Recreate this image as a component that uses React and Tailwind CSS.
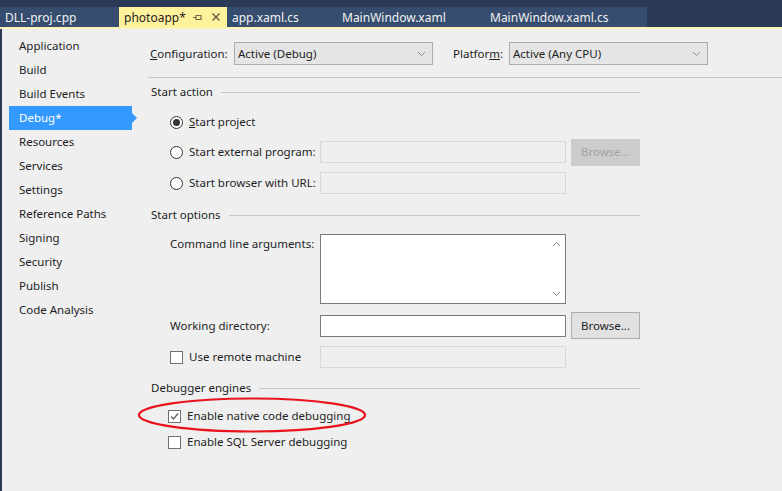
import { useState } from 'react';

const sidebarItems = [
  'Application',
  'Build',
  'Build Events',
  'Debug*',
  'Resources',
  'Services',
  'Settings',
  'Reference Paths',
  'Signing',
  'Security',
  'Publish',
  'Code Analysis',
];

const tabs = [
  { name: 'DLL-proj.cpp', w: 'w-[119px]' },
  { name: 'photoapp*', w: 'w-[108px]', active: true },
  { name: 'app.xaml.cs', w: 'w-[110px]' },
  { name: 'MainWindow.xaml', w: 'w-[148px]' },
  { name: 'MainWindow.xaml.cs', w: 'w-[162px]' },
];

function Chevron({ up }) {
  return (
    <svg width="9" height="6" viewBox="0 0 9 6" className="shrink-0">
      <path d={up ? 'M1 5 L4.5 1.5 L8 5' : 'M1 1 L4.5 4.5 L8 1'} fill="none" stroke="#8a8a8a" strokeWidth="1" />
    </svg>
  );
}

function Dropdown({ value }) {
  return (
    <div className="w-[199px] h-[23px] bg-[#e5e5e5] border border-[#acacac] flex items-center justify-between pl-[3px] pr-[6px]">
      <span>{value}</span>
      <Chevron />
    </div>
  );
}

function SectionHeader({ title, className }) {
  return (
    <div className={`flex items-center h-[16px] w-[492px] pl-[3px] ${className}`}>
      <span>{title}</span>
      <div className="flex-1 h-px bg-[#c6c6c6] ml-[8px]" />
    </div>
  );
}

function Radio({ checked }) {
  return (
    <div className="w-[13px] h-[13px] rounded-full border border-[#333333] bg-white flex items-center justify-center shrink-0">
      {checked && <div className="w-[7px] h-[7px] rounded-full bg-[#333333]" />}
    </div>
  );
}

function Checkbox({ checked }) {
  return (
    <div className="w-[13px] h-[13px] border border-[#707070] bg-white flex items-center justify-center shrink-0">
      {checked && (
        <svg width="11" height="11" viewBox="0 0 11 11">
          <path d="M2 5.5 L4.5 8 L9 2.5" fill="none" stroke="#5a5a5a" strokeWidth="1.2" />
        </svg>
      )}
    </div>
  );
}

function TextBox({ disabled, className = '' }) {
  return (
    <div
      className={`w-[246px] h-[22px] shrink-0 border ${
        disabled ? 'bg-[#efefef] border-[#d9d9d9]' : 'bg-white border-[#7a7a7a]'
      } ${className}`}
    />
  );
}

function BrowseButton({ disabled }) {
  return (
    <div
      className={`w-[69px] h-[27px] ml-[5px] flex items-center justify-center border ${
        disabled ? 'bg-[#cccccc] border-[#cccccc] text-[#a2a2a2]' : 'bg-[#e1e1e1] border-[#adadad] text-[#1e1e1e]'
      }`}
    >
      Browse...
    </div>
  );
}

export default function App() {
  const [startAction, setStartAction] = useState('project');

  return (
    <div className="relative w-[782px] h-[491px] overflow-hidden bg-[#efefef] text-[11.5px] text-[#1e1e1e] [font-family:'Noto_Sans',sans-serif] leading-none whitespace-nowrap">
      {/* document tabs */}
      <div className="h-[29px] bg-[#2a3a57] flex flex-col">
        <div className="h-[7px]" />
        <div className="flex h-[20px]">
          {tabs.map((t) =>
            t.active ? (
              <div key={t.name} className={`${t.w} bg-[#fff29d] flex items-center pl-[5px] pr-[6px] text-[#1e1e1e]`}>
                <span className="text-[12px] pt-px">{t.name}</span>
                <svg width="11" height="9" viewBox="0 0 11 9" className="ml-auto">
                  <path d="M1 4.5 H4 M4 2 V7 M4 2.5 H9 V6.5 H4" fill="none" stroke="#6e6a4a" strokeWidth="1.2" />
                </svg>
                <svg width="10" height="10" viewBox="0 0 10 10" className="ml-[8px]">
                  <path d="M1.5 1.5 L8.5 8.5 M8.5 1.5 L1.5 8.5" stroke="#5a5640" strokeWidth="1.3" />
                </svg>
              </div>
            ) : (
              <div key={t.name} className={`${t.w} bg-[#364d6f] flex items-center pl-[5px] pt-px text-[12px] text-[#f1f1f1]`}>
                {t.name}
              </div>
            )
          )}
        </div>
        <div className="h-[2px] bg-[#fdf3b5]" />
      </div>

      <div className="flex h-[462px]">
        <div className="w-[2px] bg-[#2a3a57]" />

        {/* sidebar */}
        <div className="w-[146px] pt-[5px] flex flex-col">
          {sidebarItems.map((item) =>
            item === 'Debug*' ? (
              <div key={item} className="relative ml-[7px] w-[123px] h-[24px] bg-[#3399ff] text-white flex items-center pl-[10px]">
                {item}
                <div className="absolute right-[-5px] top-[7px] w-0 h-0 border-y-[5px] border-y-transparent border-l-[5px] border-l-[#3399ff]" />
              </div>
            ) : (
              <div key={item} className="h-[24px] flex items-center pl-[17px]">
                {item}
              </div>
            )
          )}
        </div>

        {/* main */}
        <div className="flex-1 flex flex-col">
          <div className="mt-[13px] h-[23px] flex items-center pl-[2px]">
            <span className="w-[84px]">
              <span className="underline">C</span>onfiguration:
            </span>
            <Dropdown value="Active (Debug)" />
            <span className="ml-[20px] w-[56px]">
              Platfor<span className="underline">m</span>:
            </span>
            <Dropdown value="Active (Any CPU)" />
          </div>

          <div className="mt-[12px] h-px bg-[#c6c6c6]" />

          <SectionHeader title="Start action" className="mt-[6px]" />

          <div className="pl-[22px] flex flex-col">
            <div className="mt-[10px] h-[24px] flex items-center cursor-default" onClick={() => setStartAction('project')}>
              <Radio checked={startAction === 'project'} />
              <span className="ml-[6px]">
                <span className="underline">S</span>tart project
              </span>
            </div>
            <div className="mt-[4px] h-[28px] flex items-center">
              <div className="w-[150px] shrink-0 flex items-center cursor-default" onClick={() => setStartAction('external')}>
                <Radio checked={startAction === 'external'} />
                <span className="ml-[6px]">Start external program:</span>
              </div>
              <TextBox disabled />
              <BrowseButton disabled />
            </div>
            <div className="mt-[6px] h-[22px] flex items-center">
              <div className="w-[150px] shrink-0 flex items-center cursor-default" onClick={() => setStartAction('browser')}>
                <Radio checked={startAction === 'browser'} />
                <span className="ml-[6px]">Start browser with URL:</span>
              </div>
              <TextBox disabled />
            </div>
          </div>

          <SectionHeader title="Start options" className="mt-[13px]" />

          <div className="pl-[22px] flex flex-col">
            <div className="mt-[11px] flex">
              <span className="w-[150px] shrink-0 pt-[4px]">Command line arguments:</span>
              <div className="w-[246px] h-[70px] bg-white border border-[#7a7a7a] flex justify-end">
                <div className="w-[17px] flex flex-col items-center justify-between py-[6px]">
                  <Chevron up />
                  <Chevron />
                </div>
              </div>
            </div>
            <div className="mt-[8px] h-[27px] flex items-center">
              <span className="w-[150px] shrink-0">Working directory:</span>
              <TextBox />
              <BrowseButton />
            </div>
            <div className="mt-[7px] h-[22px] flex items-center">
              <div className="w-[150px] shrink-0 flex items-center">
                <Checkbox />
                <span className="ml-[6px]">Use remote machine</span>
              </div>
              <TextBox disabled />
            </div>
          </div>

          <SectionHeader title="Debugger engines" className="mt-[12px]" />

          <div className="pl-[20px] flex flex-col">
            <div className="mt-[10px] h-[20px] flex items-center">
              <Checkbox checked />
              <span className="ml-[6px]">Enable native code debugging</span>
            </div>
            <div className="mt-[6px] h-[20px] flex items-center">
              <Checkbox />
              <span className="ml-[6px]">Enable SQL Server debugging</span>
            </div>
          </div>
        </div>
      </div>

      {/* red annotation */}
      <svg className="absolute left-[136px] top-[396px]" width="232" height="38" viewBox="0 0 232 38">
        <ellipse cx="116" cy="19" rx="113" ry="16.5" fill="none" stroke="#e8131d" strokeWidth="2.2" />
      </svg>
    </div>
  );
}
